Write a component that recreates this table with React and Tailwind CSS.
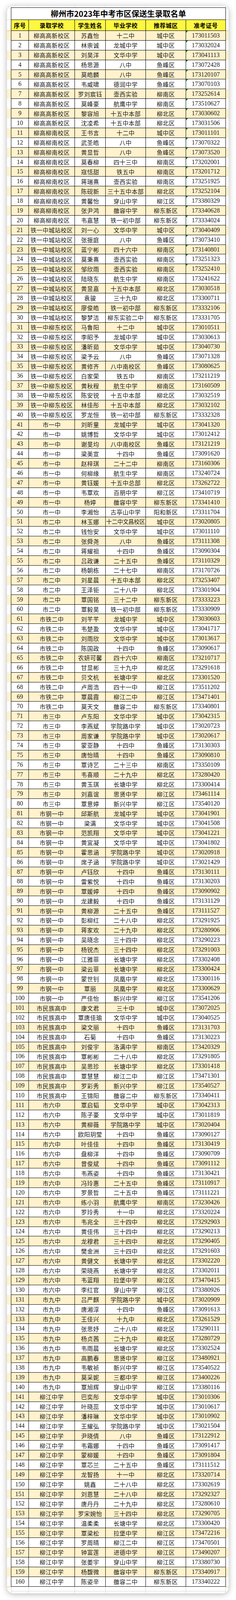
import React from "react";

const RAW = `柳高高新校区 苏鑫怡 十二中 城中区 173011503
柳高高新校区 林崇诚 龙城中学 城中区 173032024
柳高高新校区 刘昊洋 文华中学 城中区 173041113
柳高高新校区 杨思源 八中 鱼峰区 173072428
柳高高新校区 莫皓麟 八中 鱼峰区 173120107
柳高高新校区 韦威啸 德润中学 鱼峰区 173070103
柳高高新校区 罗刘宸钰 壶西实验 柳南区 173252614
柳高高新校区 莫峰豪 航鹰中学 柳南区 173510627
柳高高新校区 黎容旭 十五中本部 柳北区 173030602
柳高高新校区 沈凌希 十五中本部 柳北区 173031506
柳高柳南校区 王书言 十二中 城中区 173011101
柳高柳南校区 武圣皓 八中 鱼峰区 173070322
柳高柳南校区 黄显哲 八中 鱼峰区 173073520
柳高柳南校区 莫春柳 四十三中 柳南区 173202001
柳高柳南校区 寇恬甜 铁五中 柳南区 173201712
柳高柳南校区 蒋瑞熹 壶西实验 柳南区 173251925
柳高柳南校区 陈砚新 三十五中本部 柳北区 173252104
柳高柳南校区 黄馨怡 穿山中学 柳江区 173380329
柳高柳南校区 张尹鸿 雒容中学 柳东新区 173340628
柳高柳南校区 韦嘉慧 铁一初中部 柳东新区 173334024
铁一中城站校区 刘一心 文华中学 城中区 173040409
铁一中城站校区 张振庭 八中 鱼峰区 173073410
铁一中城站校区 蓝宁彬 四十六中 柳南区 173140801
铁一中城站校区 莫秉熹 壶西实验 柳南区 173251323
铁一中城站校区 邹欣雨 壶西实验 柳南区 173252410
铁一中城站校区 陆晓东 航生中学 柳南区 173241622
铁一中城站校区 黄昱嘉 十五中本部 柳北区 173030518
铁一中城站校区 袁骏 三十九中 柳北区 173300711
铁一中城站校区 廖俊皓 铁一初中部 柳东新区 173332106
铁一中城站校区 黎梦洁 柳东实验二中 柳东新区 173331705
铁一中柳东校区 马鲁阳 十二中 城中区 173010511
铁一中柳东校区 李昭予 龙城中学 城中区 173030613
铁一中柳东校区 潘昕茹 文华中学 城中区 173040730
铁一中柳东校区 梁予云 八中 鱼峰区 173071328
铁一中柳东校区 黄修齐 八中南校区 鱼峰区 173080625
铁一中柳东校区 白家荣 铁五中 柳南区 173211219
铁一中柳东校区 黄秋程 航生中学 柳南区 173160509
铁一中柳东校区 陈安锐 十五中本部 柳北区 173032519
铁一中柳东校区 林佳彤 十五中本部 柳北区 173032102
铁一中柳东校区 罗龙恒 铁一初中部 柳东新区 173332328
市一中 刘昕童 龙城中学 城中区 173041320
市一中 姚博哲 文华中学 城中区 173012412
市一中 谢旻均 八中南校区 鱼峰区 173121219
市一中 梁美宣 十四中 鱼峰区 173091620
市一中 赵梓琪 二十二中 柳南区 173160306
市一中 何柳缘 航生中学 柳南区 173240724
市一中 黄钰媛 十五中总部 柳北区 173262722
市一中 韦覃欢 百朋中学 柳江区 173410719
市一中 杨婷 雒容中学 柳东新区 173341410
市一中 李湘怡 古亭山中学 阳和新区 173311704
市二中 林玉娜 十二中文昌校区 城中区 173020805
市二中 钱怡安 文华中学 城中区 173011110
市二中 张舜尧 八中 鱼峰区 173111308
市二中 蒋耀祖 十四中 鱼峰区 173090304
市二中 吕政谦 二十五中 鱼峰区 173110329
市二中 杨朝栋 二十七中 柳南区 173170726
市二中 刘星晨 十五中本部 柳北区 173253407
市二中 王泽钜 二十八中 柳北区 173301904
市二中 覃国铭 三十二中 柳东新区 173333223
市二中 覃毅昊 铁一初中部 柳东新区 173330909
市铁二中 刘芊芊 龙城中学 城中区 173030603
市铁二中 韦楚盈 文华中学 城中区 173041717
市铁二中 刘雨欣 文华中学 城中区 173013617
市铁二中 陈国政 十四中 鱼峰区 173090617
市铁二中 农妍可馨 四十六中 柳南区 173210717
市铁二中 甘显彬 三十九中 柳北区 173291618
市铁二中 贝文杭 长塘中学 柳北区 173301520
市铁二中 卢周浩 四十一中 柳江区 173511202
市铁二中 覃晨霞 柳江二中 柳江区 173471401
市铁二中 莫天文 雒容二中 柳东新区 173340801
市三中 卢东阳 文华中学 城中区 173042315
市三中 李燕斌 学院路中学 城中区 173020723
市三中 周家谦 学院路中学 城中区 173020617
市三中 蒙亚静 十四中 鱼峰区 173130303
市三中 唐怡晴 十四中 鱼峰区 173090810
市三中 覃诗艺 二十三中 柳南区 173350109
市三中 韦喜顺 二十九中 柳北区 173280420
市三中 黄玉琪 长塘中学 柳北区 173300414
市三中 刘嘉谊 思贤中学 柳江区 173461114
市三中 覃意婷 新兴中学 柳江区 173540120
市钢一中 邱斯航 龙城中学 城中区 173041901
市钢一中 梁满 文华中学 城中区 173041508
市钢一中 范凯翔 文华中学 城中区 173041221
市钢一中 黄宜凝 文华中学 城中区 173041802
市钢一中 霍思涵 学院路中学 城中区 173020918
市钢一中 席子涵 学院路中学 城中区 173021429
市钢一中 卢钰欣 十四中 鱼峰区 173130111
市钢一中 雷紫悦 十四中 鱼峰区 173130203
市钢一中 覃媛婷 十四中 鱼峰区 173090902
市钢一中 龙建毅 十四中 鱼峰区 173131129
市钢一中 黄柳源 二十五中 鱼峰区 173111527
市钢一中 彭柳红 二十八中 柳北区 173291925
市钢一中 蒋家欢 二十九中 柳北区 173280906
市钢一中 吴晓念 三十四中 柳北区 173290223
市钢一中 杨锐杰 三十四中 柳北区 173291003
市钢一中 江雅菲 长塘中学 柳北区 173302408
市钢一中 梁云菲 长塘中学 柳北区 173300424
市钢一中 蒙世钊 凤凰中学 柳北区 173300116
市钢一中 覃丽 凤凰中学 柳北区 173300629
市钢一中 严佳怡 新兴中学 柳江区 173541206
市民族高中 康文君 三十中 城中区 173072025
市民族高中 覃唐佳瑜 文华中学 城中区 173040525
市民族高中 梁文丽 十四中 鱼峰区 173131703
市民族高中 石菊 十四中 鱼峰区 173130223
市民族高中 刘俊宇 洛满中学 柳南区 173420329
市民族高中 覃彬彬 二十八中 柳北区 173291805
市民族高中 吴思珍 长塘中学 柳北区 173301418
市民族高中 覃慧慧 柳江二中 柳江区 173471301
市民族高中 罗彩秀 新兴中学 柳江区 173540527
市民族高中 王锦阳 雒容二中 柳东新区 173340411
市六中 覃启韬 文华中学 城中区 173042313
市六中 陈子豪 文华中学 城中区 173011819
市六中 黄柳薇 学院路中学 城中区 173020404
市六中 欧阳玥莹 十四中 鱼峰区 173090127
市六中 叶佳佳 十四中 鱼峰区 173130419
市六中 盘柳洋 十四中 鱼峰区 173090709
市六中 曾俊斌 十四中 鱼峰区 173091112
市六中 韦燕姿 十四中 鱼峰区 173130421
市六中 冯玲惠 二十五中 鱼峰区 173110917
市六中 罗景哲 二十五中 鱼峰区 173111221
市六中 练小羽 航鹰中学 柳南区 173230426
市六中 罗玲秀 十一中 柳北区 173320224
市六中 韦兆全 三十四中 柳北区 173292903
市六中 黄佳伟 三十四中 柳北区 173290213
市六中 龙穆君 三十四中 柳北区 173290405
市六中 樊金洲 三十四中 柳北区 173291603
市六中 黄健文 长塘中学 柳北区 173302220
市六中 荣晓燕 长塘中学 柳北区 173302011
市六中 韦蓝翔 拉堡中学 柳江区 173470415
市六中 李红官 穿山中学 柳江区 173380926
市九中 吕严麒 学院路中学 城中区 173020909
市九中 唐湘淳 十四中 鱼峰区 173091613
市九中 王佳兴 十九中 柳北区 173261529
市九中 张思妤 二十八中 柳北区 173290111
市九中 杨贞茜 二十九中 柳北区 173280729
市九中 韦雨晨 长塘中学 柳北区 173302524
市九中 高鹏春 思贤中学 柳江区 173480921
市九中 韦敏祯 新兴中学 柳江区 173540522
市九中 莫采妮 三都中学 柳江区 173400226
市九中 覃旭辉 穿山中学 柳江区 173380116
柳江中学 巴奕彤 文华中学 城中区 173010306
柳江中学 叶晓蕊 文华中学 城中区 173010617
柳江中学 潘梓琳 文华中学 城中区 173010902
柳江中学 王耀弘 学院路中学 城中区 173021504
柳江中学 尹晓倩 八中 鱼峰区 173122912
柳江中学 韦霜娜 十四中 鱼峰区 173091417
柳江中学 蒙柳媛 十四中 鱼峰区 173091804
柳江中学 覃芯兰 二十五中 鱼峰区 173111512
柳江中学 龙智扬 十一中 柳北区 173320714
柳江中学 姚鑫 二十八中 柳北区 173302619
柳江中学 刘恩慧 二十八中 柳北区 173292327
柳江中学 唐丹丹 二十九中 柳北区 173280610
柳江中学 罗宋婉怡 三十四中 柳北区 173290705
柳江中学 温柔柔 长塘中学 柳北区 173300420
柳江中学 覃梁松 拉堡中学 柳江区 173472216
柳江中学 罗周晴 柳江二中 柳江区 173470501
柳江中学 钟富莲 进德中学 柳江区 173490207
柳江中学 张姜宇 穿山中学 柳江区 173380730
柳江中学 杨馥微 雒容中学 柳东新区 173340917
柳江中学 陈姿辛 雒容二中 柳东新区 173340222`;

const rows = RAW.trim()
  .split("\n")
  .map((line, i) => {
    const [school, name, from, area, id] = line.trim().split(" ");
    return { no: i + 1, school, name, from, area, id };
  });

const headers = ["序号", "录取学校", "学生姓名", "毕业学校", "推荐城区", "准考证号"];

// column widths of the sheet
const GRID = "grid grid-cols-[45px_118px_79px_103px_103px_102px] grid-rows-[100%]";
const CJK = "font-['Noto_Sans_CJK_SC',sans-serif]";
const SERIF = "font-['Liberation_Serif','Noto_Sans_CJK_SC',serif]";
const CELL =
  "h-full min-h-0 flex items-center justify-center border-r border-b border-black overflow-hidden whitespace-nowrap leading-none";
const TXT = `${CELL} ${CJK} text-[15px] tracking-[0.5px]`;
const TXT_TIGHT = `${CELL} ${CJK} text-[14.5px] tracking-[-0.3px]`;

// faint spreadsheet grid beyond the table
const GhostCells = ({ className = "" }) => (
  <div className={`w-[551px] shrink-0 border-l border-[#d4d4d4] ${GRID} ${className}`}>
    {headers.map((h) => (
      <div key={h} className="h-full border-r border-[#d4d4d4]" />
    ))}
  </div>
);

const Row = ({ r }) => {
  const odd = r.no % 2 === 1;
  const bg = odd ? "bg-[#fff2cc]" : "bg-white";
  return (
    <div className={`flex h-[24.9px] overflow-hidden ${bg}`}>
      <div className="w-[10px] shrink-0" />
      <div className={`h-full w-[551px] shrink-0 border-l border-black ${GRID} text-[#1a1a1a]`}>
        <div className={`${CELL} ${SERIF} text-[16px]`}>{r.no}</div>
        <div className={TXT}>{r.school}</div>
        <div className={TXT}>{r.name}</div>
        <div className={r.from.length > 6 ? TXT_TIGHT : TXT}>{r.from}</div>
        <div className={TXT}>{r.area}</div>
        <div className={`${CELL} ${SERIF} text-[16px] relative`}>
          {r.no <= 25 && (
            <span className="absolute left-0 top-0 w-0 h-0 border-t-[5px] border-r-[5px] border-t-[#1e7b1e] border-r-transparent" />
          )}
          {r.id}
        </div>
      </div>
      <div className="flex-1" />
    </div>
  );
};

export default function App() {
  return (
    <div className="bg-white pt-[15px] pb-[16px] leading-none">
      <div className="ml-[18px] w-[568px] rounded-[16px] bg-white shadow-[0_2px_16px_rgba(0,0,0,0.3)] overflow-hidden">
        {/* top strip of empty sheet cells */}
        <div className="flex h-[4px] overflow-hidden">
          <div className="w-[10px] shrink-0" />
          <GhostCells className="h-full" />
          <div className="flex-1" />
        </div>

        {/* title */}
        <div className="flex h-[32px] overflow-hidden">
          <div className="w-[10px] shrink-0 border-b border-[#d4d4d4]" />
          <div
            className={`h-full w-[551px] shrink-0 border border-black flex items-center justify-center ${CJK} text-[20px] font-bold text-black`}
          >
            柳州市2023年中考市区保送生录取名单
          </div>
          <div className="flex-1 border-b border-[#d4d4d4]" />
        </div>

        {/* header */}
        <div className="flex h-[28px] overflow-hidden">
          <div className="w-[10px] shrink-0 border-b border-[#f2a93b]" />
          <div className={`h-full w-[551px] shrink-0 border-l border-black ${GRID} bg-[#fef843]`}>
            {headers.map((h) => (
              <div key={h} className={`${CELL} ${CJK} text-[15px] font-bold tracking-[0.5px] text-black`}>
                {h}
              </div>
            ))}
          </div>
          <div className="flex-1 border-b border-[#f2a93b]" />
        </div>

        {rows.map((r) => (
          <Row key={r.no} r={r} />
        ))}

        {/* bottom strip of empty sheet cells */}
        <div className="flex h-[17px] overflow-hidden">
          <div className="w-[10px] shrink-0 border-t border-[#f2a93b]" />
          <div className="flex flex-col">
            <GhostCells className="h-[12px] border-b border-[#d4d4d4]" />
            <GhostCells className="h-[5px]" />
          </div>
          <div className="flex-1 border-t border-[#f2a93b]" />
        </div>
      </div>
    </div>
  );
}
